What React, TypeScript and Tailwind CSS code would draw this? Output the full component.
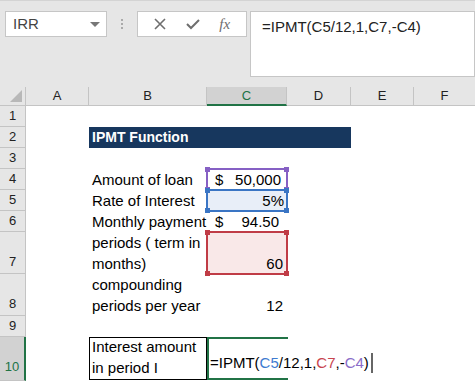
import React from 'react'

const font = { fontFamily: '"Liberation Sans", Arial, sans-serif' }

const RefBox = ({ border, dot, fill }: { border: string; dot: string; fill: string }) => (
    <div className={`absolute -top-[1px] -left-[1px] -right-[1px] -bottom-[1px] border-2 ${border} ${fill}`}>
        <span className={`absolute -top-[3px] -left-[3px] w-[5px] h-[5px] ${dot}`} />
        <span className={`absolute -top-[3px] -right-[3px] w-[5px] h-[5px] ${dot}`} />
        <span className={`absolute -bottom-[3px] -left-[3px] w-[5px] h-[5px] ${dot}`} />
        <span className={`absolute -bottom-[3px] -right-[3px] w-[5px] h-[5px] ${dot}`} />
    </div>
)

export default function App() {
    return (
        <div className="w-[475px] h-[381px] overflow-hidden bg-white text-black" style={font}>
            {/* toolbar / formula bar */}
            <div className="h-[87px] bg-[#e6e6e6] border-t border-[#d4d4d4] flex items-start pt-[10px] pl-[5px]">
                <div className="w-[102px] h-[26px] bg-white border border-[#c6c6c6] flex items-center justify-between pl-[7px] pr-[6px]">
                    <span className="text-[15px] text-[#444]">IRR</span>
                    <span className="w-0 h-0 border-l-[5px] border-r-[5px] border-t-[5px] border-l-transparent border-r-transparent border-t-[#777]" />
                </div>
                <div className="w-[30px] h-[26px] flex flex-col items-center justify-center gap-[2px]">
                    <span className="w-[2px] h-[2px] bg-[#aaa]" />
                    <span className="w-[2px] h-[2px] bg-[#aaa]" />
                    <span className="w-[2px] h-[2px] bg-[#aaa]" />
                </div>
                <div className="w-[110px] h-[26px] bg-white border border-[#c6c6c6] flex items-center justify-around px-[6px]">
                    <svg width="12" height="12" viewBox="0 0 12 12">
                        <path d="M1 1L11 11M11 1L1 11" stroke="#6e6e6e" strokeWidth="1.6" />
                    </svg>
                    <svg width="14" height="12" viewBox="0 0 14 12">
                        <path d="M1 6L5 10L13 2" stroke="#6e6e6e" strokeWidth="2" fill="none" />
                    </svg>
                    <span className="text-[15px] italic text-[#6e6e6e]" style={{ fontFamily: '"Liberation Serif", serif' }}>
                        fx
                    </span>
                </div>
                <div className="ml-[3px] flex-1 h-[66px] bg-white border border-[#c6c6c6] pl-[11px] pt-[3px]">
                    <span className="text-[15px] text-[#222]">=IPMT(C5/12,1,C7,-C4)</span>
                </div>
            </div>

            {/* sheet */}
            <div className="grid grid-cols-[26px_63px_118px_80px_64px_63px_61px] grid-rows-[19px_21px_21px_21px_21px_21px_21px_42px_42px_21px_44px] text-[15px]">
                {/* corner */}
                <div className="row-start-1 col-start-1 bg-[#e6e6e6] border-r border-b border-[#c4c4c4] relative">
                    <svg className="absolute right-[3px] bottom-[3px]" width="12" height="12" viewBox="0 0 12 12">
                        <path d="M12 0L12 12L0 12Z" fill="#b8b8b8" />
                    </svg>
                </div>
                {/* column headers */}
                <div className="row-start-1 col-start-2 bg-[#e6e6e6] border-r border-b border-[#c4c4c4] flex items-center justify-center text-[13px] text-[#222]">A</div>
                <div className="row-start-1 col-start-3 bg-[#e6e6e6] border-r border-b border-[#c4c4c4] flex items-center justify-center text-[13px] text-[#222]">B</div>
                <div className="row-start-1 col-start-4 bg-[#d2d2d2] border-r border-[#c4c4c4] border-b-2 border-b-[#217346] flex items-center justify-center text-[13px] text-[#217346]">
                    C
                </div>
                <div className="row-start-1 col-start-5 bg-[#e6e6e6] border-r border-b border-[#c4c4c4] flex items-center justify-center text-[13px] text-[#222]">D</div>
                <div className="row-start-1 col-start-6 bg-[#e6e6e6] border-r border-b border-[#c4c4c4] flex items-center justify-center text-[13px] text-[#222]">E</div>
                <div className="row-start-1 col-start-7 bg-[#e6e6e6] border-b border-[#c4c4c4] flex items-center justify-center text-[13px] text-[#222]">F</div>

                {/* row headers */}
                <div className="row-start-2 col-start-1 bg-[#e6e6e6] border-r border-b border-[#c4c4c4] flex items-center justify-center text-[13px] text-[#222]">1</div>
                <div className="row-start-3 col-start-1 bg-[#e6e6e6] border-r border-b border-[#c4c4c4] flex items-center justify-center text-[13px] text-[#222]">2</div>
                <div className="row-start-4 col-start-1 bg-[#e6e6e6] border-r border-b border-[#c4c4c4] flex items-center justify-center text-[13px] text-[#222]">3</div>
                <div className="row-start-5 col-start-1 bg-[#e6e6e6] border-r border-b border-[#c4c4c4] flex items-center justify-center text-[13px] text-[#222]">4</div>
                <div className="row-start-6 col-start-1 bg-[#e6e6e6] border-r border-b border-[#c4c4c4] flex items-center justify-center text-[13px] text-[#222]">5</div>
                <div className="row-start-7 col-start-1 bg-[#e6e6e6] border-r border-b border-[#c4c4c4] flex items-center justify-center text-[13px] text-[#222]">6</div>
                <div className="row-start-8 col-start-1 bg-[#e6e6e6] border-r border-b border-[#c4c4c4] flex items-end justify-center pb-[2px] text-[13px] text-[#222]">7</div>
                <div className="row-start-9 col-start-1 bg-[#e6e6e6] border-r border-b border-[#c4c4c4] flex items-end justify-center pb-[2px] text-[13px] text-[#222]">8</div>
                <div className="row-start-10 col-start-1 bg-[#e6e6e6] border-r border-b border-[#c4c4c4] flex items-center justify-center text-[13px] text-[#222]">9</div>
                <div className="row-start-11 col-start-1 bg-[#d2d2d2] border-r-2 border-r-[#217346] border-b border-[#c4c4c4] flex items-end justify-center pb-[4px] text-[13px] text-[#217346]">10</div>

                {/* title */}
                <div className="row-start-3 col-start-3 col-span-3 bg-[#17375e] text-white font-bold text-[14px] flex items-center pl-[3px]">
                    IPMT Function
                </div>

                {/* labels */}
                <div className="row-start-5 col-start-3 flex items-end pl-[3px] leading-[21px]">Amount of loan</div>
                <div className="row-start-6 col-start-3 flex items-end pl-[3px] leading-[21px]">Rate of Interest</div>
                <div className="row-start-7 col-start-3 flex items-end pl-[3px] leading-[21px] whitespace-nowrap">Monthly payment</div>
                <div className="row-start-8 col-start-3 flex flex-col justify-end pl-[3px] leading-[21px]">
                    <span>periods ( term in</span>
                    <span>months)</span>
                </div>
                <div className="row-start-9 col-start-3 flex flex-col justify-end pl-[3px] leading-[21px]">
                    <span>compounding</span>
                    <span>periods per year</span>
                </div>
                <div className="row-start-11 col-start-3 h-[43px] border border-black flex flex-col justify-end pl-[2px] pb-[1px] leading-[21px]">
                    <span>Interest amount</span>
                    <span>in period I</span>
                </div>

                {/* values */}
                <div className="row-start-5 col-start-4 relative">
                    <RefBox border="border-[#8660c4]" dot="bg-[#8660c4]" fill="bg-transparent" />
                    <div className="relative h-full flex items-end justify-between pl-[8px] pr-[6px] leading-[21px]">
                        <span>$</span>
                        <span>50,000</span>
                    </div>
                </div>
                <div className="row-start-6 col-start-4 relative">
                    <RefBox border="border-[#3a75c4]" dot="bg-[#3a75c4]" fill="bg-[#e8eef8]" />
                    <div className="relative h-full flex items-end justify-end pr-[3px] leading-[21px]">5%</div>
                </div>
                <div className="row-start-7 col-start-4 flex items-end justify-between pl-[8px] pr-[8px] leading-[21px]">
                    <span>$</span>
                    <span>94.50</span>
                </div>
                <div className="row-start-8 col-start-4 relative">
                    <RefBox border="border-[#c03c46]" dot="bg-[#c03c46]" fill="bg-[#f9e8e8]" />
                    <div className="relative h-full flex items-end justify-end pr-[4px] leading-[21px]">60</div>
                </div>
                <div className="row-start-9 col-start-4 flex items-end justify-end pr-[4px] leading-[21px]">12</div>

                {/* active cell, in edit mode */}
                <div className="row-start-11 col-start-4 relative">
                    <div className="absolute top-0 left-0 w-[81px] h-[43px] border-2 border-r-0 border-[#217346]" />
                    <div className="absolute left-[3px] bottom-[8px] whitespace-nowrap leading-[21px] flex items-center">
                        <span>=IPMT(</span>
                        <span className="text-[#3e7bd0]">C5</span>
                        <span>/12,1,</span>
                        <span className="text-[#c8454e]">C7</span>
                        <span>,-</span>
                        <span className="text-[#8a6cc8]">C4</span>
                        <span>)</span>
                        <span className="ml-[2px] w-[2px] h-[20px] bg-[#666]" />
                    </div>
                </div>
            </div>
        </div>
    )
}
